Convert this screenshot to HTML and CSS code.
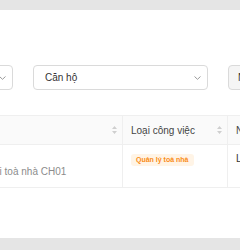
FILE: index.html
```html
<!DOCTYPE html>
<html lang="vi">
<head>
    <meta charset="UTF-8">
    <meta name="viewport" content="width=device-width, initial-scale=1.0">
    <title>Công việc</title>
    <link rel="stylesheet" href="styles.css">
</head>
<body>
    <div class="panel">
        <div class="filters">
            <div class="select">
                <span class="select-value">Tất cả</span>
                <svg class="chevron" width="7" height="4" viewBox="0 0 7 4"><path d="M0.5 0.5 L3.5 3.3 L6.5 0.5" fill="none" stroke="#9a9a9a" stroke-width="1"/></svg>
            </div>
            <div class="select select-wide">
                <span class="select-value">Căn hộ</span>
                <svg class="chevron" width="7" height="4" viewBox="0 0 7 4"><path d="M0.5 0.5 L3.5 3.3 L6.5 0.5" fill="none" stroke="#9a9a9a" stroke-width="1"/></svg>
            </div>
            <div class="select select-disabled">
                <span class="select-value">Nhân viên</span>
            </div>
        </div>

        <div class="table">
            <div class="tr thead">
                <div class="th">
                    <span>Công việc</span>
                    <svg class="sort" width="5" height="8" viewBox="0 0 5 8"><path d="M2.5 0 L5 3 L0 3 Z M2.5 8 L5 5 L0 5 Z" fill="#cfcfcf"/></svg>
                </div>
                <div class="th">
                    <span>Loại công việc</span>
                    <svg class="sort" width="5" height="8" viewBox="0 0 5 8"><path d="M2.5 0 L5 3 L0 3 Z M2.5 8 L5 5 L0 5 Z" fill="#cfcfcf"/></svg>
                </div>
                <div class="th">
                    <span>Người phụ trách</span>
                </div>
            </div>
            <div class="tr">
                <div class="td">
                    <div class="cell-title">CV01</div>
                    <div class="cell-desc">Công việc tại toà nhà CH01</div>
                </div>
                <div class="td">
                    <span class="tag">Quản lý toà nhà</span>
                </div>
                <div class="td">
                    <div class="cell-title">Lê Văn An</div>
                </div>
            </div>
        </div>
    </div>
</body>
</html>
```

FILE: styles.css
```css
* {
    box-sizing: border-box;
    margin: 0;
    padding: 0;
}

body {
    font-family: "Liberation Sans", Arial, sans-serif;
    font-size: 10px;
    color: #333;
    background-color: #e5e5e5;
    overflow: hidden;
}

.panel {
    margin-top: 10px;
    height: 228px;
    background-color: #fff;
    overflow: hidden;
}

.filters {
    display: flex;
    gap: 20px;
    padding-top: 55px;
    margin-left: -147px;
}

.select {
    display: flex;
    align-items: center;
    justify-content: space-between;
    flex: none;
    width: 160px;
    height: 25px;
    padding: 0 6px 0 11px;
    border: 1px solid #dadada;
    border-radius: 4px;
    background-color: #fff;
}

.select-wide {
    width: 175px;
}

.select-disabled {
    width: 200px;
    padding-left: 9px;
    background-color: #f5f5f5;
}

.select-value {
    line-height: 14px;
    color: #333;
}

.table {
    display: grid;
    width: 500px;
    margin-top: 25px;
    margin-left: -68px;
    border-top: 1px solid #efefef;
}

.tr {
    display: grid;
    grid-template-columns: 191px 105px 204px;
}

.th {
    display: flex;
    align-items: center;
    justify-content: space-between;
    height: 29px;
    padding: 0 5px 0 8px;
    background-color: #fafafa;
    border-right: 1px solid #efefef;
    border-bottom: 1px solid #efefef;
    color: #444;
}

.td {
    height: 43px;
    padding: 8px 8px 0;
    border-right: 1px solid #efefef;
    border-bottom: 1px solid #efefef;
}

.td:first-child {
    padding-left: 12px;
}

.cell-title {
    line-height: 12px;
    color: #333;
}

.cell-desc {
    line-height: 14px;
    color: #8c8c8c;
}

.tag {
    display: inline-block;
    height: 12px;
    padding: 0 5px;
    line-height: 12px;
    font-size: 7px;
    font-weight: bold;
    color: #fa8c16;
    background-color: #fff4e6;
    border-radius: 3px;
}
```
